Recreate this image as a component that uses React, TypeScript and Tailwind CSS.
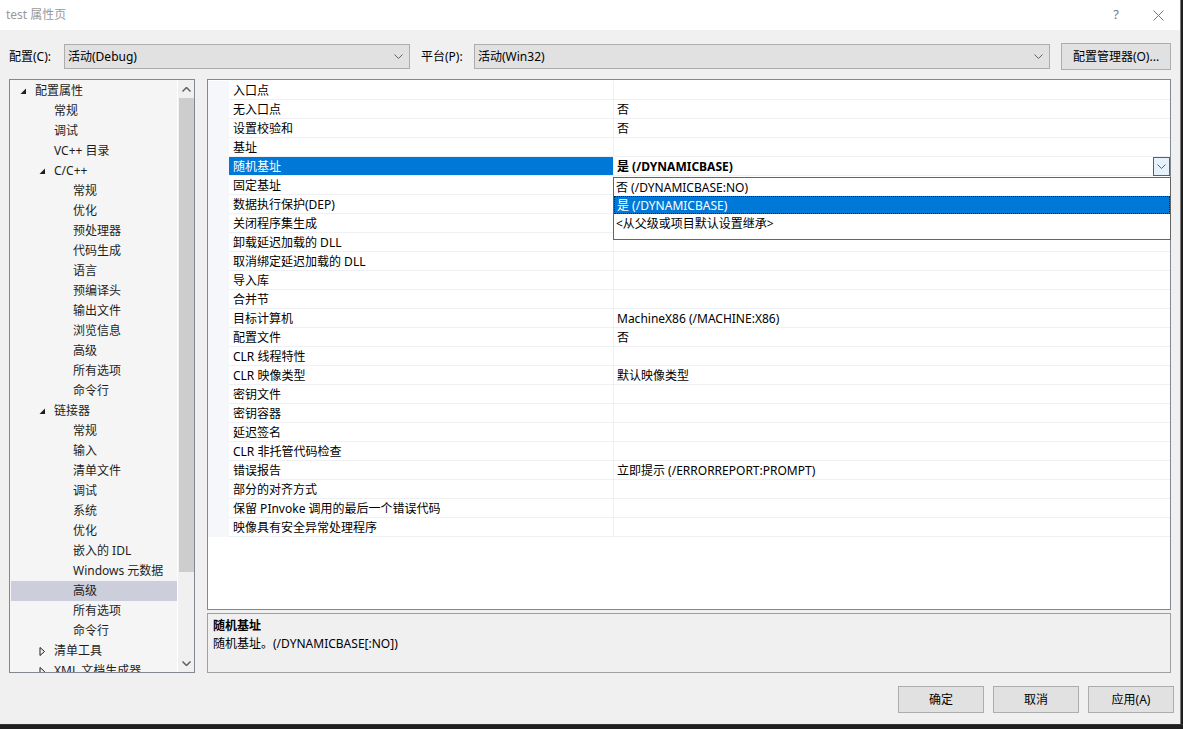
import React from "react";

const font = { fontFamily: '"Noto Sans", "Noto Sans CJK SC", sans-serif' };

type TreeItem = { label: string; level: number; toggle?: "open" | "closed"; selected?: boolean };

const tree: TreeItem[] = [
  { label: "配置属性", level: 0, toggle: "open" },
  { label: "常规", level: 1 },
  { label: "调试", level: 1 },
  { label: "VC++ 目录", level: 1 },
  { label: "C/C++", level: 1, toggle: "open" },
  { label: "常规", level: 2 },
  { label: "优化", level: 2 },
  { label: "预处理器", level: 2 },
  { label: "代码生成", level: 2 },
  { label: "语言", level: 2 },
  { label: "预编译头", level: 2 },
  { label: "输出文件", level: 2 },
  { label: "浏览信息", level: 2 },
  { label: "高级", level: 2 },
  { label: "所有选项", level: 2 },
  { label: "命令行", level: 2 },
  { label: "链接器", level: 1, toggle: "open" },
  { label: "常规", level: 2 },
  { label: "输入", level: 2 },
  { label: "清单文件", level: 2 },
  { label: "调试", level: 2 },
  { label: "系统", level: 2 },
  { label: "优化", level: 2 },
  { label: "嵌入的 IDL", level: 2 },
  { label: "Windows 元数据", level: 2 },
  { label: "高级", level: 2, selected: true },
  { label: "所有选项", level: 2 },
  { label: "命令行", level: 2 },
  { label: "清单工具", level: 1, toggle: "closed" },
  { label: "XML 文档生成器", level: 1, toggle: "closed" },
];

const props: [string, string][] = [
  ["入口点", ""],
  ["无入口点", "否"],
  ["设置校验和", "否"],
  ["基址", ""],
  ["随机基址", "是 (/DYNAMICBASE)"],
  ["固定基址", ""],
  ["数据执行保护(DEP)", ""],
  ["关闭程序集生成", ""],
  ["卸载延迟加载的 DLL", ""],
  ["取消绑定延迟加载的 DLL", ""],
  ["导入库", ""],
  ["合并节", ""],
  ["目标计算机", "MachineX86 (/MACHINE:X86)"],
  ["配置文件", "否"],
  ["CLR 线程特性", ""],
  ["CLR 映像类型", "默认映像类型"],
  ["密钥文件", ""],
  ["密钥容器", ""],
  ["延迟签名", ""],
  ["CLR 非托管代码检查", ""],
  ["错误报告", "立即提示 (/ERRORREPORT:PROMPT)"],
  ["部分的对齐方式", ""],
  ["保留 PInvoke 调用的最后一个错误代码", ""],
  ["映像具有安全异常处理程序", ""],
];

function Chevron({ className = "" }: { className?: string }) {
  return (
    <svg width="9" height="5" viewBox="0 0 9 5" className={className}>
      <polyline points="0.5,0.5 4.5,4.5 8.5,0.5" fill="none" stroke="#606060" strokeWidth="1" />
    </svg>
  );
}

function Combo({ text, width }: { text: string; width: string }) {
  return (
    <div className={`${width} h-[25px] bg-[#e1e1e1] border border-[#adadad] flex items-center pl-[3px] pr-[6px]`}>
      <span className="flex-1 text-[12px] text-black">{text}</span>
      <Chevron />
    </div>
  );
}

function Button({ text, width }: { text: string; width: string }) {
  return (
    <div className={`${width} h-[27px] bg-[#e1e1e1] border border-[#adadad] flex items-center justify-center text-[12px] text-black`}>
      {text}
    </div>
  );
}

function Toggle({ kind }: { kind: "open" | "closed" }) {
  if (kind === "open")
    return (
      <svg width="7" height="7" viewBox="0 0 7 7">
        <polygon points="6,0.5 6,6 0.5,6" fill="#1e1e1e" />
      </svg>
    );
  return (
    <svg width="7" height="9" viewBox="0 0 7 9">
      <polygon points="1,0.5 5.5,4.5 1,8.5" fill="none" stroke="#1e1e1e" strokeWidth="1" />
    </svg>
  );
}

export default function App() {
  return (
    <div className="w-[1183px] h-[729px] bg-[#1f1f1f] flex flex-col overflow-hidden" style={font}>
      <div className="w-[1181px] h-[724px] bg-[#f0f0f0] border-r border-[#7a7a7a] flex flex-col">
        {/* title bar */}
        <div className="h-[30px] bg-white flex items-center pl-[6px] pr-[16px] shrink-0">
          <span className="flex-1 text-[12px] text-[#999999]">test 属性页</span>
          <span className="text-[13px] text-[#777] mr-[34px]">?</span>
          <svg width="11" height="11" viewBox="0 0 11 11">
            <path d="M0.5 0.5 L10.5 10.5 M10.5 0.5 L0.5 10.5" stroke="#777" strokeWidth="1" />
          </svg>
        </div>

        {/* config row */}
        <div className="flex items-center mt-[13px] pl-[9px] h-[27px] shrink-0">
          <span className="text-[12px] text-black w-[55px]">配置(C):</span>
          <Combo text="活动(Debug)" width="w-[346px]" />
          <span className="text-[12px] text-black ml-[11px] w-[53px]">平台(P):</span>
          <Combo text="活动(Win32)" width="w-[576px]" />
          <div className="ml-[11px]">
            <Button text="配置管理器(O)..." width="w-[110px]" />
          </div>
        </div>

        {/* main */}
        <div className="flex mt-[9px] pl-[9px] h-[594px] shrink-0">
          {/* tree */}
          <div className="w-[186px] h-[594px] border border-[#828790] bg-[#f5f5f5] flex overflow-hidden">
            <div className="flex-1 pl-[1px] pt-[1px] overflow-hidden">
              {tree.map((t, i) => (
                <div
                  key={i}
                  className={`h-[20px] flex items-center text-[12px] text-[#1e1e1e] whitespace-nowrap ${t.selected ? "bg-[#cccedb]" : ""}`}
                >
                  <div
                    className={`flex items-center justify-end shrink-0 pr-[8px] ${
                      t.level === 0 ? "w-[24px]" : t.level === 1 ? "w-[43px]" : "w-[62px]"
                    }`}
                  >
                    {t.toggle && <Toggle kind={t.toggle} />}
                  </div>
                  <span>{t.label}</span>
                </div>
              ))}
            </div>
            <div className="w-[17px] shrink-0 bg-[#f0f0f0] border-l border-white flex flex-col items-center">
              <div className="h-[18px] flex items-center justify-center">
                <svg width="9" height="5" viewBox="0 0 9 5">
                  <polyline points="0.5,4.5 4.5,0.5 8.5,4.5" fill="none" stroke="#606060" strokeWidth="1.5" />
                </svg>
              </div>
              <div className="w-[15px] h-[474px] bg-[#cdcdcd]" />
              <div className="flex-1" />
              <div className="h-[18px] flex items-center justify-center">
                <svg width="9" height="5" viewBox="0 0 9 5">
                  <polyline points="0.5,0.5 4.5,4.5 8.5,0.5" fill="none" stroke="#606060" strokeWidth="1.5" />
                </svg>
              </div>
            </div>
          </div>

          {/* right column */}
          <div className="ml-[12px] w-[964px] flex flex-col">
            <div className="relative h-[532px] border border-[#828790] bg-white flex flex-col pt-[1px]">
              {props.map(([name, value], i) => {
                const sel = i === 4;
                return (
                  <div key={i} className="h-[19px] flex text-[12px] whitespace-nowrap">
                    <div className="w-[21px] shrink-0 bg-[#f5f7fb]" />
                    <div className="flex-1 flex border-b border-[#eef0f4]">
                      <div
                        className={`w-[385px] shrink-0 pl-[4px] pt-[1px] flex items-center border-r border-[#eef0f4] ${
                          sel ? "bg-[#0078d7] text-white" : "text-black"
                        }`}
                      >
                        {name}
                      </div>
                      <div className={`flex-1 pl-[3px] flex items-center text-black ${sel ? "font-bold" : ""}`}>
                        <span className="flex-1 pt-[1px]">{value}</span>
                        {sel && (
                          <div className="w-[17px] h-[19px] border border-[#0078d7] bg-[#e5f1fb] flex items-center justify-center">
                            <Chevron />
                          </div>
                        )}
                      </div>
                    </div>
                  </div>
                );
              })}

              {/* dropdown list */}
              <div className="absolute left-[405px] top-[97px] w-[558px] h-[63px] bg-white border border-[#646464] text-[12px] text-black whitespace-nowrap">
                <div className="h-[18px] flex items-center pl-[2px] pt-[1px]">否 (/DYNAMICBASE:NO)</div>
                <div className="h-[18px] flex items-center pl-[2px] pt-[1px] bg-[#0078d7] text-white border border-dotted border-[#1e1e1e]">
                  是 (/DYNAMICBASE)
                </div>
                <div className="h-[18px] flex items-center pl-[2px] pt-[1px]">&lt;从父级或项目默认设置继承&gt;</div>
              </div>
            </div>

            <div className="mt-[3px] h-[60px] border border-[#a0a0a0] bg-[#f0f0f0] px-[5px] pt-[3px] text-[12px] text-black">
              <div className="font-bold leading-[18px]">随机基址</div>
              <div className="leading-[18px]">随机基址。(/DYNAMICBASE[:NO])</div>
            </div>
          </div>
        </div>

        {/* buttons */}
        <div className="flex justify-end gap-[9px] mt-[13px] pr-[6px]">
          <Button text="确定" width="w-[86px]" />
          <Button text="取消" width="w-[86px]" />
          <Button text="应用(A)" width="w-[86px]" />
        </div>
      </div>
      <div className="flex-1 border-t border-[#333]" />
    </div>
  );
}
